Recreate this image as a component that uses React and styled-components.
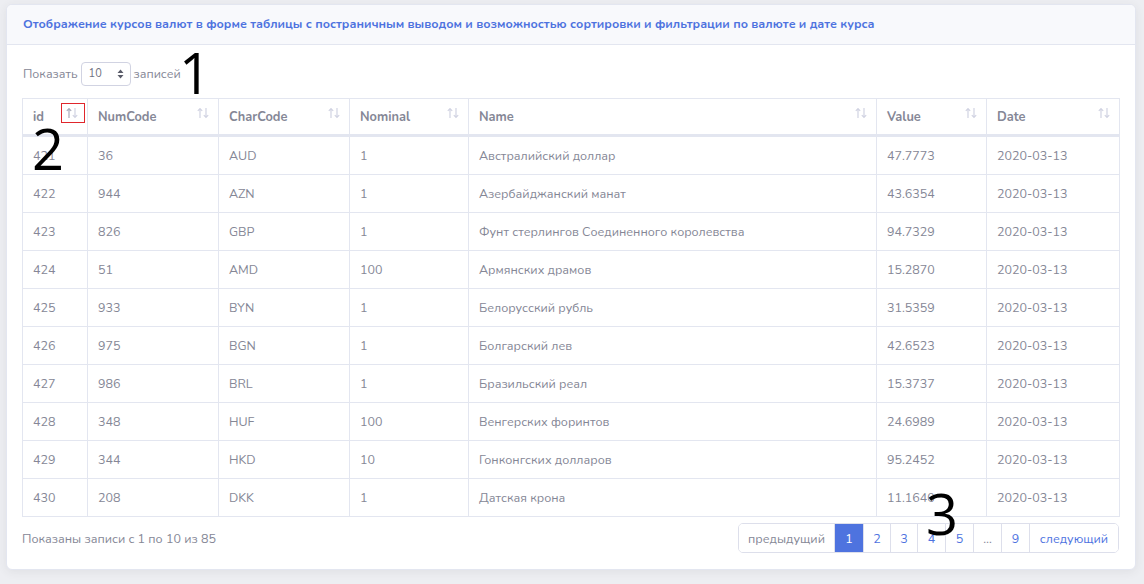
import React from 'react';
import styled, { createGlobalStyle } from 'styled-components';

const GlobalStyle = createGlobalStyle`
  html, body {
    margin: 0;
    padding: 0;
    background: #edeef2;
  }
  body {
    font-family: 'Nunito', 'Noto Sans', 'Liberation Sans', sans-serif;
    color: #858796;
  }
`;

const Page = styled.div`
  padding: 4px 8px 14px 6px;
  position: relative;
`;

const Card = styled.div`
  background: #fff;
  border: 1px solid #e3e6f0;
  border-radius: 6px;
  box-shadow: 0 2px 10px rgba(58, 59, 69, 0.08);
  overflow: hidden;
`;

const CardHeader = styled.div`
  height: 40px;
  display: flex;
  align-items: center;
  padding: 0 16px 2px;
  background: #f8f9fc;
  border-bottom: 1px solid #e3e6f0;
  color: #4e73df;
  font-weight: 700;
  font-size: 12.4px;
  box-sizing: border-box;
`;

const CardBody = styled.div`
  padding: 16px 16px 16px 15px;
`;

const LengthRow = styled.div`
  display: flex;
  align-items: center;
  gap: 3px;
  height: 25px;
  font-size: 12.4px;
  margin-bottom: 12px;
  padding-left: 1px;
`;

const Select = styled.div`
  width: 50px;
  height: 24px;
  box-sizing: border-box;
  border: 1px solid #d1d3e2;
  border-radius: 4px;
  display: flex;
  align-items: center;
  justify-content: space-between;
  padding: 0 6px 0 7px;
  font-size: 11px;
  color: #6e707e;
`;

const Table = styled.table`
  width: 1097px;
  border-collapse: collapse;
  table-layout: fixed;
  font-size: 12.5px;
`;

const Th = styled.th`
  height: 35px;
  padding: 0 2px 0 10px;
  border: 1px solid #e3e6f0;
  border-bottom: 3px solid #e3e6f0;
  text-align: left;
  font-weight: 700;
  font-size: 12.8px;
  color: #858796;
`;

const ThInner = styled.div`
  display: flex;
  justify-content: space-between;
  align-items: center;
`;

const SortIcon = styled.span`
  display: inline-flex;
  padding: 3px 5px 3px 3px;
  margin-top: -7px;
  border: 1px solid ${p => (p.$marked ? '#e0262c' : 'transparent')};
`;

const Td = styled.td`
  height: 37px;
  padding: 0 10px;
  border: 1px solid #e3e6f0;
  color: #858796;
`;

const Footer = styled.div`
  display: flex;
  justify-content: space-between;
  align-items: center;
  margin-top: 6px;
  font-size: 12.5px;
`;

const Pager = styled.div`
  display: flex;
  border: 1px solid #dddfeb;
  border-radius: 5px;
  overflow: hidden;
  height: 30px;
  box-sizing: border-box;
`;

const PageItem = styled.div`
  display: flex;
  align-items: center;
  justify-content: center;
  min-width: ${p => p.$w}px;
  box-sizing: border-box;
  border-left: ${p => (p.$first ? 'none' : '1px solid #dddfeb')};
  font-size: 12.5px;
  background: ${p => (p.$active ? '#4e73df' : '#fff')};
  color: ${p => (p.$active ? '#fff' : p.$disabled ? '#858796' : '#4e73df')};
`;

const Mark = styled.div`
  position: absolute;
  left: ${p => p.$x}px;
  top: ${p => p.$y}px;
  font-family: 'Open Sans', 'Liberation Sans', sans-serif;
  font-size: 56px;
  line-height: 1;
  color: #000;
  pointer-events: none;
`;

const Arrows = ({ dark }) => (
  <svg width="14" height="12" viewBox="0 0 14 12">
    <g fill="none" strokeWidth="1.2">
      <path d="M4 11V1.5M1.8 3.8L4 1.5l2.2 2.3" stroke={dark ? '#a9abbb' : '#d1d3e2'} />
      <path d="M10 1v9.5M7.8 8.2L10 10.5l2.2-2.3" stroke="#d1d3e2" />
    </g>
  </svg>
);

const Caret = () => (
  <svg width="7" height="10" viewBox="0 0 7 10">
    <path d="M3.5 0.5L6.5 4H0.5zM3.5 9.5L0.5 6h6z" fill="#5a5c69" />
  </svg>
);

const columns = [
  { name: 'id', w: 65 },
  { name: 'NumCode', w: 131 },
  { name: 'CharCode', w: 131 },
  { name: 'Nominal', w: 119 },
  { name: 'Name', w: 408 },
  { name: 'Value', w: 110 },
  { name: 'Date', w: 133 },
];

const rows = [
  [421, 36, 'AUD', 1, 'Австралийский доллар', '47.7773'],
  [422, 944, 'AZN', 1, 'Азербайджанский манат', '43.6354'],
  [423, 826, 'GBP', 1, 'Фунт стерлингов Соединенного королевства', '94.7329'],
  [424, 51, 'AMD', 100, 'Армянских драмов', '15.2870'],
  [425, 933, 'BYN', 1, 'Белорусский рубль', '31.5359'],
  [426, 975, 'BGN', 1, 'Болгарский лев', '42.6523'],
  [427, 986, 'BRL', 1, 'Бразильский реал', '15.3737'],
  [428, 348, 'HUF', 100, 'Венгерских форинтов', '24.6989'],
  [429, 344, 'HKD', 10, 'Гонконгских долларов', '95.2452'],
  [430, 208, 'DKK', 1, 'Датская крона', '11.1640'],
];

const pages = [
  { label: 'предыдущий', w: 95, disabled: true },
  { label: '1', w: 29, active: true },
  { label: '2', w: 27 },
  { label: '3', w: 27 },
  { label: '4', w: 28 },
  { label: '5', w: 28 },
  { label: '…', w: 28, disabled: true },
  { label: '9', w: 28 },
  { label: 'следующий', w: 89 },
];

export default function App() {
  return (
    <Page>
      <GlobalStyle />
      <Card>
        <CardHeader>
          Отображение курсов валют в форме таблицы с постраничным выводом и возможностью сортировки и фильтрации по валюте и дате курса
        </CardHeader>
        <CardBody>
          <LengthRow>
            Показать
            <Select>
              10
              <Caret />
            </Select>
            записей
          </LengthRow>
          <Table>
            <colgroup>
              {columns.map(c => (
                <col key={c.name} style={{ width: c.w }} />
              ))}
            </colgroup>
            <thead>
              <tr>
                {columns.map((c, i) => (
                  <Th key={c.name}>
                    <ThInner>
                      {c.name}
                      <SortIcon $marked={i === 0}>
                        <Arrows dark={i === 0} />
                      </SortIcon>
                    </ThInner>
                  </Th>
                ))}
              </tr>
            </thead>
            <tbody>
              {rows.map(r => (
                <tr key={r[0]}>
                  {r.map((v, i) => (
                    <Td key={i}>{v}</Td>
                  ))}
                  <Td>2020-03-13</Td>
                </tr>
              ))}
            </tbody>
          </Table>
          <Footer>
            <span>Показаны записи с 1 по 10 из 85</span>
            <Pager>
              {pages.map((p, i) => (
                <PageItem
                  key={p.label}
                  $w={p.w}
                  $first={i === 0}
                  $active={p.active}
                  $disabled={p.disabled}
                >
                  {p.label}
                </PageItem>
              ))}
            </Pager>
          </Footer>
        </CardBody>
      </Card>
      <Mark $x={179} $y={44}>1</Mark>
      <Mark $x={32} $y={120}>2</Mark>
      <Mark $x={926} $y={485}>3</Mark>
    </Page>
  );
}
